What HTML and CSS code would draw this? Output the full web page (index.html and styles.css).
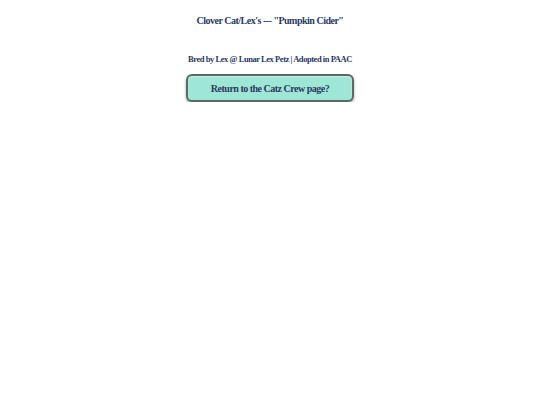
FILE: index.html
```html
<!DOCTYPE html>
<html lang="en">
<head>
  <meta charset="UTF-8" />
  <title>Clover Cat</title>
  <link rel="stylesheet" href="styles.css">
</head>
<body>
  <div class="page">
    <h1 class="title">Clover Cat/Lex's --- "Pumpkin Cider"</h1>
    <p class="credit">Bred by Lex @ Lunar Lex Petz | Adopted in PAAC</p>
    <a class="back-btn" href="#">Return to the Catz Crew page?</a>
  </div>
</body>
</html>
```
FILE: styles.css
```css
* { margin: 0; padding: 0; box-sizing: border-box; }
body {
  background: #fff;
  color: #2c3a64;
  font-family: "Liberation Serif", "Times New Roman", serif;
}

.page {
  display: flex;
  flex-direction: column;
  align-items: center;
  padding-top: 14px;
}

.title {
  font-size: 10px;
  letter-spacing: -0.5px;
  font-weight: bold;
  line-height: 14px;
}

.credit {
  margin-top: 24px;
  font-size: 8.5px;
  letter-spacing: -0.45px;
  font-weight: bold;
  line-height: 14px;
}

.back-btn {
  margin-top: 8px;
  width: 168px;
  height: 28px;
  display: flex;
  align-items: center;
  justify-content: center;
  background: #9ee6d5;
  border: 2px solid #5a6a68;
  border-radius: 6px;
  box-shadow: 0 2px 3px rgba(0, 0, 0, 0.35), inset 0 1px 2px rgba(255,255,255,0.5);
  color: #2c3a64;
  font-size: 10px;
  letter-spacing: -0.5px;
  font-weight: bold;
  text-decoration: none;
}
```
